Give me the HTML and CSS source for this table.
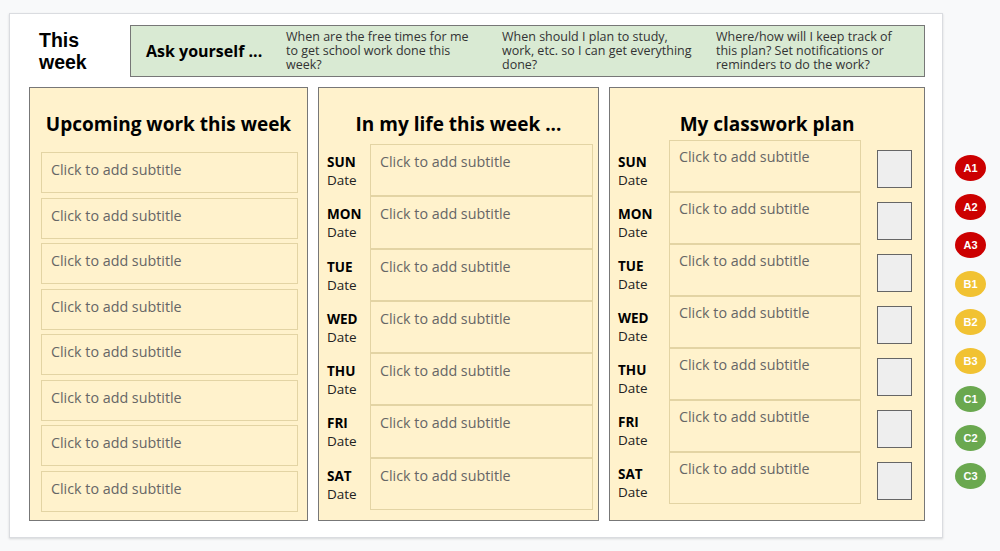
FILE: index.html
```html
<!DOCTYPE html>
<html lang="en">
<head>
<meta charset="utf-8">
<title>This week</title>
<link rel="stylesheet" href="styles.css">
</head>
<body>
<div class="page">
  <div class="slide">
    <div class="header">
      <div class="week-title"><span class="wt-line">This</span><span class="wt-line">week</span></div>
      <div class="ask">
        <div class="ask-title">Ask yourself ...</div>
        <div class="ask-q">When are the free times for me to get school work done this week?</div>
        <div class="ask-q">When should I plan to study, work, etc. so I can get everything done?</div>
        <div class="ask-q">Where/how will I keep track of this plan? Set notifications or reminders to do the work?</div>
      </div>
    </div>
    <div class="panels">
      <section class="panel panel-upcoming">
        <h2 class="panel-title">Upcoming work this week</h2>
        <div class="list">
          <div class="box">Click to add subtitle</div>
          <div class="box">Click to add subtitle</div>
          <div class="box">Click to add subtitle</div>
          <div class="box">Click to add subtitle</div>
          <div class="box">Click to add subtitle</div>
          <div class="box">Click to add subtitle</div>
          <div class="box">Click to add subtitle</div>
          <div class="box">Click to add subtitle</div>
        </div>
      </section>
      <section class="panel panel-life">
        <h2 class="panel-title">In my life this week ...</h2>
        <div class="days">
          <div class="day"><div class="label"><b>SUN</b><span>Date</span></div><div class="box">Click to add subtitle</div></div>
          <div class="day"><div class="label"><b>MON</b><span>Date</span></div><div class="box">Click to add subtitle</div></div>
          <div class="day"><div class="label"><b>TUE</b><span>Date</span></div><div class="box">Click to add subtitle</div></div>
          <div class="day"><div class="label"><b>WED</b><span>Date</span></div><div class="box">Click to add subtitle</div></div>
          <div class="day"><div class="label"><b>THU</b><span>Date</span></div><div class="box">Click to add subtitle</div></div>
          <div class="day"><div class="label"><b>FRI</b><span>Date</span></div><div class="box">Click to add subtitle</div></div>
          <div class="day"><div class="label"><b>SAT</b><span>Date</span></div><div class="box">Click to add subtitle</div></div>
        </div>
      </section>
      <section class="panel panel-plan">
        <h2 class="panel-title">My classwork plan</h2>
        <div class="days">
          <div class="day"><div class="label"><b>SUN</b><span>Date</span></div><div class="box">Click to add subtitle</div><div class="check"></div></div>
          <div class="day"><div class="label"><b>MON</b><span>Date</span></div><div class="box">Click to add subtitle</div><div class="check"></div></div>
          <div class="day"><div class="label"><b>TUE</b><span>Date</span></div><div class="box">Click to add subtitle</div><div class="check"></div></div>
          <div class="day"><div class="label"><b>WED</b><span>Date</span></div><div class="box">Click to add subtitle</div><div class="check"></div></div>
          <div class="day"><div class="label"><b>THU</b><span>Date</span></div><div class="box">Click to add subtitle</div><div class="check"></div></div>
          <div class="day"><div class="label"><b>FRI</b><span>Date</span></div><div class="box">Click to add subtitle</div><div class="check"></div></div>
          <div class="day"><div class="label"><b>SAT</b><span>Date</span></div><div class="box">Click to add subtitle</div><div class="check"></div></div>
        </div>
      </section>
    </div>
  </div>
  <div class="badges">
    <div class="badge red">A1</div>
    <div class="badge red">A2</div>
    <div class="badge red">A3</div>
    <div class="badge yellow">B1</div>
    <div class="badge yellow">B2</div>
    <div class="badge yellow">B3</div>
    <div class="badge green">C1</div>
    <div class="badge green">C2</div>
    <div class="badge green">C3</div>
  </div>
</div>
</body>
</html>
```
FILE: styles.css
```css
* { box-sizing: border-box; }
html, body { margin: 0; padding: 0; }
body {
  background: #f8f9fa;
  font-family: "Open Sans", "Liberation Sans", sans-serif;
  color: #000;
  width: 1000px;
  height: 551px;
  overflow: hidden;
}
.page {
  display: flex;
  align-items: flex-start;
}
.slide {
  margin: 13px 0 0 9px;
  width: 934px;
  height: 525px;
  background: #fff;
  border: 1px solid #dadce0;
  box-shadow: 0 1px 2px rgba(60, 64, 67, 0.18);
  padding: 11px 17px 16px 19px;
  display: flex;
  flex-direction: column;
}
.header {
  display: flex;
  height: 52px;
  flex: none;
}
.week-title {
  width: 101px;
  padding-left: 10px;
  font-family: "Liberation Sans", Arial, sans-serif;
  font-weight: 700;
  font-size: 19.5px;
  align-self: center;
  display: flex;
  flex-direction: column;
}
.wt-line {
  display: block;
  height: 22.5px;
  line-height: 22.5px;
}
.ask {
  flex: 1;
  background: #d9ead3;
  border: 1px solid #777;
  display: grid;
  grid-template-columns: 140px 216px 214px 1fr;
  align-items: center;
  padding-left: 15px;
}
.ask-title {
  font-weight: 700;
  font-size: 16px;
}
.ask-q {
  font-size: 12.5px;
  line-height: 14px;
  color: #333;
  max-width: 196px;
}
.panels {
  margin-top: 10px;
  display: grid;
  grid-template-columns: 279px 281px 316px;
  column-gap: 10px;
  height: 434px;
}
.panel {
  background: #fff2cc;
  border: 1px solid #777;
  display: flex;
  flex-direction: column;
}
.panel-title {
  margin: 0;
  padding-top: 24px;
  height: 48px;
  font-size: 19px;
  line-height: 24px;
  font-weight: 700;
  text-align: center;
  white-space: nowrap;
}
.box {
  background: #fff2cc;
  border: 1.5px solid #e3d4a4;
  color: #666;
  font-size: 14.3px;
  line-height: 18px;
  padding: 7px 8px 0 9px;
}
.panel-upcoming .list {
  margin-top: 16px;
  padding: 0 9px 0 11px;
  display: flex;
  flex-direction: column;
  gap: 4.5px;
}
.panel-upcoming .box {
  height: 41px;
  padding-top: 8px;
}
.days {
  display: flex;
  flex-direction: column;
}
.day {
  display: flex;
  height: 52.3px;
}
.label {
  display: flex;
  flex-direction: column;
  font-size: 13.5px;
  line-height: 18px;
  color: #222;
}
.label b { color: #000; }
.panel-life .days {
  margin-top: 8px;
  padding-left: 8px;
}
.panel-life .label {
  width: 43px;
  padding-top: 9px;
}
.panel-life .box {
  width: 223px;
  padding-top: 8px;
}
.panel-plan .days {
  margin-top: 4px;
  padding-left: 8px;
}
.panel-plan .day { height: 52px; }
.panel-plan .label {
  width: 51px;
  padding-top: 13px;
}
.panel-plan .box {
  width: 192px;
  padding-top: 7px;
}
.check {
  margin: 10px 0 0 16px;
  width: 35px;
  height: 38px;
  background: #eeeeee;
  border: 1.5px solid #666;
}
.badges {
  margin: 155px 0 0 12px;
  display: flex;
  flex-direction: column;
  gap: 12.5px;
}
.badge {
  width: 31px;
  height: 26px;
  border-radius: 50%;
  color: #fff;
  font-family: "Liberation Sans", Arial, sans-serif;
  font-weight: 700;
  font-size: 11px;
  display: flex;
  align-items: center;
  justify-content: center;
}
.red { background: #cc0000; }
.yellow { background: #f1c232; }
.green { background: #6aa84f; }
```
